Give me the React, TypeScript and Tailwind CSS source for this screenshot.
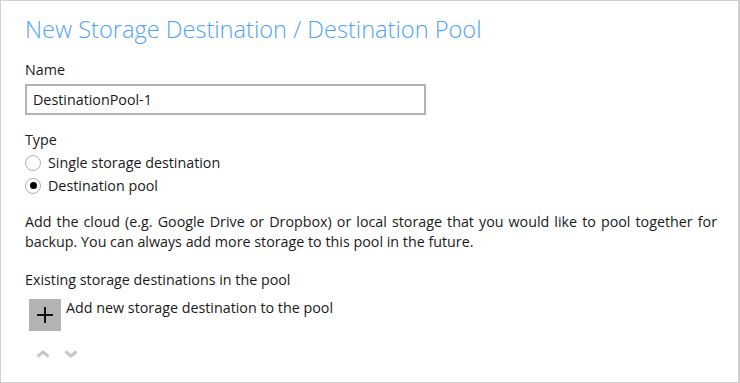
function Radio({ checked, label }: { checked?: boolean; label: string }) {
    return (
        <label className="flex items-center gap-[7px] h-[23px]">
            <span className="w-[16px] h-[16px] rounded-full border border-[#b0b0b0] bg-white flex items-center justify-center">
                {checked && <span className="w-[7px] h-[7px] rounded-full bg-black" />}
            </span>
            <span>{label}</span>
        </label>
    );
}

function Chevron({ down }: { down?: boolean }) {
    return (
        <svg width="14" height="8" viewBox="0 0 14 8">
            <path d={down ? "M1.5 1.5 L7 6 L12.5 1.5" : "M1.5 6.5 L7 2 L12.5 6.5"} fill="none" stroke="#c8c8c8" strokeWidth="3" />
        </svg>
    );
}

export default function App() {
    return (
        <div className="w-[740px] h-[383px] bg-white border border-[#d0d0d0] border-r-2 text-[14.3px] text-[#1a1a1a]" style={{ fontFamily: '"Open Sans", "Liberation Sans", sans-serif' }}>
            <div className="pl-[24px] pr-[21px] pt-[11px]">
                <h1 className="text-[23.6px] leading-[34px] font-light text-[#4fa3f7]">New Storage Destination / Destination Pool</h1>

                <div className="mt-[14px] leading-[20px]">Name</div>
                <input
                    className="mt-[4px] w-[401px] h-[31px] border-2 border-[#b3b3b3] px-[6px] outline-none"
                    defaultValue="DestinationPool-1"
                />

                <div className="mt-[15px] leading-[20px]">Type</div>
                <div className="mt-[1px] flex flex-col">
                    <Radio label="Single storage destination" />
                    <Radio checked label="Destination pool" />
                </div>

                <p className="mt-[15px] leading-[20px] text-justify">
                    Add the cloud (e.g. Google Drive or Dropbox) or local storage that you would like to pool together for backup. You can always add more storage to this pool in the future.
                </p>

                <div className="mt-[18px] leading-[20px]">Existing storage destinations in the pool</div>
                <div className="mt-[9px] ml-[4px] flex items-start gap-[5px]">
                    <button className="w-[32px] h-[32px] bg-[#b3b3b3] flex items-center justify-center">
                        <svg width="18" height="18" viewBox="0 0 18 18">
                            <path d="M9 1v16M1 9h16" stroke="#111" strokeWidth="2" />
                        </svg>
                    </button>
                    <span className="leading-[20px] mt-[-1px]">Add new storage destination to the pool</span>
                </div>
                <div className="mt-[19px] ml-[11px] flex gap-[14px]">
                    <Chevron />
                    <Chevron down />
                </div>
            </div>
        </div>
    );
}
